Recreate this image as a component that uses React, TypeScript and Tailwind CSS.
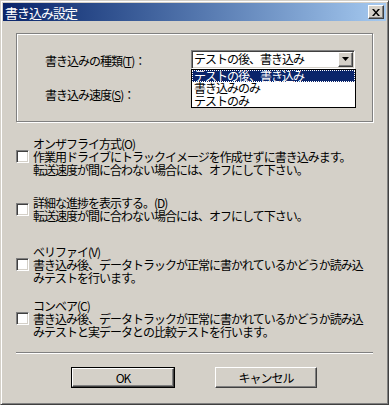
import React from "react";

const raised =
  "border border-t-white border-l-white border-r-[#404040] border-b-[#404040] shadow-[inset_-1px_-1px_0_#808080,inset_1px_1px_0_#d4d0c8]";
const sunken =
  "border border-t-[#808080] border-l-[#808080] border-r-white border-b-white shadow-[inset_1px_1px_0_#404040,inset_-1px_-1px_0_#d4d0c8]";

function Check() {
  return <div className={`w-[13px] h-[13px] shrink-0 bg-white ${sunken}`} />;
}

function Option({ lines, className }: { lines: React.ReactNode[]; className?: string }) {
  return (
    <div className={`flex items-center ${className ?? ""}`}>
      <Check />
      <div className="ml-[4px] leading-[13px] whitespace-nowrap">
        {lines.map((l, i) => (
          <div key={i}>{l}</div>
        ))}
      </div>
    </div>
  );
}

export default function App() {
  return (
    <div
      className="w-[389px] h-[405px] bg-[#d4d0c8] border border-t-[#d4d0c8] border-l-[#d4d0c8] border-r-[#404040] border-b-[#404040] shadow-[inset_1px_1px_0_#fff,inset_-1px_-1px_0_#808080] p-[2px] text-black text-[12px] tracking-[-1px] overflow-hidden"
      style={{ fontFamily: '"MS UI Gothic", "Noto Sans CJK JP", sans-serif' }}
    >
      {/* title bar */}
      <div className="h-[18px] flex items-center justify-between bg-gradient-to-r from-[#0a246a] to-[#a6caf0] pl-[2px] pr-[2px]">
        <span className="text-white text-[13px] leading-none tracking-[-1px]">書き込み設定</span>
        <div className={`w-[16px] h-[14px] bg-[#d4d0c8] flex items-center justify-center ${raised}`}>
          <svg width="8" height="7" viewBox="0 0 8 7">
            <path d="M0 0h2l2 2.5L6 0h2L5 3.5 8 7H6L4 4.5 2 7H0l3-3.5z" fill="#000" />
          </svg>
        </div>
      </div>

      <div className="mx-[13px]">
        {/* group box */}
        <div className="mt-[12px] h-[89px] border border-[#808080] shadow-[1px_1px_0_#fff,inset_1px_1px_0_#fff] pt-[17px] pl-[28px]">
          <div className="flex items-center h-[19px]">
            <span className="w-[146px]">
              書き込みの種類(<u>T</u>)：
            </span>
            <div className={`relative w-[164px] h-[19px] bg-white flex items-center ${sunken} -mt-[3px]`}>
              <span className="pl-[2px] flex-1">テストの後、書き込み</span>
              <div className={`w-[15px] h-[15px] mr-[1px] bg-[#d4d0c8] flex items-center justify-center ${raised}`}>
                <svg width="7" height="4" viewBox="0 0 7 4">
                  <path d="M0 0h7L3.5 4z" fill="#000" />
                </svg>
              </div>
              <div className="absolute left-[-1px] top-[18px] w-[165px] bg-white border border-black leading-[12.5px] z-10">
                <div className="bg-[#0a246a] text-white outline outline-1 outline-dotted outline-white -outline-offset-1 pl-[2px]">
                  テストの後、書き込み
                </div>
                <div className="pl-[2px]">書き込みのみ</div>
                <div className="pl-[2px]">テストのみ</div>
              </div>
            </div>
          </div>
          <div className="flex items-center h-[19px] mt-[15px]">
            <span>
              書き込み速度(<u>S</u>)：
            </span>
          </div>
        </div>

        <Option
          className="mt-[15px]"
          lines={[
            "オンザフライ方式(O)",
            "作業用ドライブにトラックイメージを作成せずに書き込みます。",
            "転送速度が間に合わない場合には、オフにして下さい。",
          ]}
        />
        <Option
          className="mt-[20px]"
          lines={["詳細な進捗を表示する。(D)", "転送速度が間に合わない場合には、オフにして下さい。"]}
        />
        <Option
          className="mt-[23px]"
          lines={[
            "ベリファイ(V)",
            "書き込み後、データトラックが正常に書かれているかどうか読み込",
            "みテストを行います。",
          ]}
        />
        <Option
          className="mt-[15px]"
          lines={[
            "コンベア(C)",
            "書き込み後、データトラックが正常に書かれているかどうか読み込",
            "みテストと実データとの比較テストを行います。",
          ]}
        />

        {/* separator */}
        <div className="mt-[14px] h-[2px] border-t border-[#808080] border-b border-b-white" />

        {/* buttons */}
        <div className="mt-[13px] flex justify-center gap-[40px] pr-[1px]">
          <div className="border border-black">
            <div className={`w-[102px] h-[19px] bg-[#d4d0c8] flex items-center justify-center ${raised}`}>OK</div>
          </div>
          <div className={`w-[102px] h-[21px] bg-[#d4d0c8] flex items-center justify-center ${raised}`}>
            キャンセル
          </div>
        </div>
      </div>
    </div>
  );
}
